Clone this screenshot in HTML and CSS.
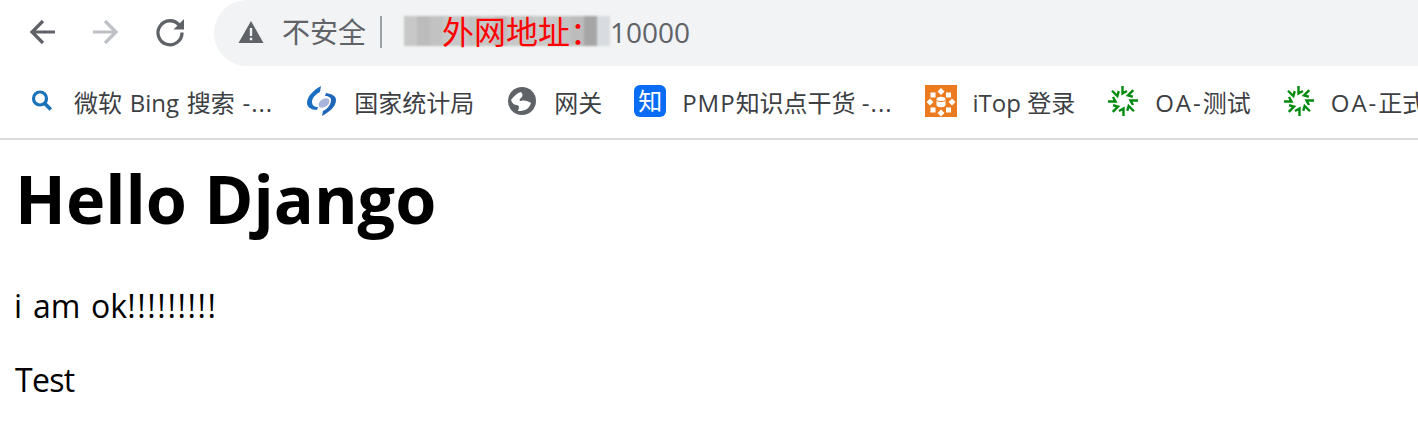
FILE: index.html
```html
<!DOCTYPE html>
<html lang="zh-CN">
<head>
<meta charset="utf-8">
<title>Hello Django</title>
<link rel="stylesheet" href="styles.css">
</head>
<body>
<header class="chrome">
  <div class="toolbar">
    <div class="nav">
      <svg class="nav-icon" viewBox="0 0 32 32"><path d="M29 16H6M17 5 6 16l11 11" fill="none" stroke="#5f6368" stroke-width="3.200"/></svg>
      <svg class="nav-icon" viewBox="0 0 32 32"><path d="M3 16h23M15 5l11 11-11 11" fill="none" stroke="#bdc1c6" stroke-width="3.200"/></svg>
      <svg class="nav-icon" viewBox="0 0 32 32"><path d="M25.400 9.300A12 12 0 1 0 28 16.500" fill="none" stroke="#5f6368" stroke-width="3.300"/><path d="M30 3V13.500H19.500z" fill="#5f6368"/></svg>
    </div>
    <div class="omnibox">
      <svg class="warn" viewBox="0 0 26 24"><path d="M13 1L25.500 23H.500z" fill="#5f6368"/><path d="M11.800 8h2.400v8h-2.400zM11.800 17.800h2.400v2.400h-2.400z" fill="#f1f3f4"/></svg>
      <span class="insecure">不安全</span>
      <span class="divider"></span>
      <span class="url"><span class="url-host">1</span><span class="url-port">10000</span></span>
    </div>
  </div>
  <nav class="bookmarks">
    <a class="bookmark bookmark-first">
      <span class="fav"><svg viewBox="0 0 32 32" class="fav-svg"><circle cx="14" cy="13.500" r="6.500" fill="none" stroke="#1a73b8" stroke-width="3.200"/><path d="M18.800 18.500l6 6" stroke="#1a73b8" stroke-width="3.600" fill="none"/></svg></span>
      <span class="label label-spaced">微软 Bing 搜索 <span class="more">-...</span></span>
    </a>
    <a class="bookmark">
      <span class="fav"><svg viewBox="0 0 32 32" class="fav-svg"><path d="M15 1C8 5 1 11 1 18c0 4 4 7 10 7l1-3c-4 0-6-2-6-5 0-4 4-8 8-10z" fill="#1a6fc0"/><path d="M16 31c7-4 14-9 14-16 0-4-4-6-10-7l-1 3c4 0 6 2 6 4 0 5-4 9-8 11z" fill="#1f66b8"/><ellipse cx="18" cy="18" rx="6" ry="4" transform="rotate(-35 18 18)" fill="#a9b4dc"/></svg></span>
      <span class="label">国家统计局</span>
    </a>
    <a class="bookmark">
      <span class="fav"><svg viewBox="0 0 32 32" class="fav-svg"><circle cx="16" cy="16" r="14" fill="#5f6368"/><path d="M5 15C8 11 11 8 15 7c2 2 2 4 0 6-2 1-2 3 0 3 3-1 7 0 10 2-1 3-3 6-6 7-3 1-5 1-7 1 1-3 2-5-1-6-3 0-5-2-6-5z" fill="#fff"/></svg></span>
      <span class="label">网关</span>
    </a>
    <a class="bookmark">
      <span class="fav zhihu">知</span>
      <span class="label"><span class="wide">PMP</span>知识点干货 <span class="more">-...</span></span>
    </a>
    <a class="bookmark">
      <span class="fav"><svg viewBox="0 0 32 32" class="fav-svg"><rect width="32" height="32" fill="#ec7a1f"/><g fill="#fff"><path d="M11.500 14c0-3 9-3 9 0v6c0 3-9 3-9 0z"/><path d="M16 3l3.500 3.500L16 10l-3.500-3.500zM5 13.500L8.500 17 5 20.500 1.500 17zM27 13.500l3.500 3.500-3.500 3.500-3.500-3.500zM16 24.500l3.500 3.500-3.500 3.500-3.500-3.500z"/><rect x="5.500" y="7.500" width="5" height="5"/><rect x="21" y="7.500" width="5" height="5"/><rect x="5.500" y="22.500" width="5" height="5"/><rect x="21" y="22.500" width="5" height="5"/></g><path d="M11.500 15.500c2 1.500 7 1.500 9 0" fill="none" stroke="#ec7a1f"/></svg></span>
      <span class="label">iTop 登录</span>
    </a>
    <a class="bookmark">
      <span class="fav"><svg viewBox="0 0 32 32" class="fav-svg"><defs><path id="oa" d="M15.500 1v7.500l4.500-2.500" fill="none" stroke="#008a0e" stroke-width="2.400"/></defs><use href="#oa"/><use href="#oa" transform="rotate(45 16 16)"/><use href="#oa" transform="rotate(90 16 16)"/><use href="#oa" transform="rotate(135 16 16)"/><use href="#oa" transform="rotate(180 16 16)"/><use href="#oa" transform="rotate(225 16 16)"/><use href="#oa" transform="rotate(270 16 16)"/><use href="#oa" transform="rotate(315 16 16)"/></svg></span>
      <span class="label"><span class="wider">OA-</span>测试</span>
    </a>
    <a class="bookmark">
      <span class="fav"><svg viewBox="0 0 32 32" class="fav-svg"><use href="#oa"/><use href="#oa" transform="rotate(45 16 16)"/><use href="#oa" transform="rotate(90 16 16)"/><use href="#oa" transform="rotate(135 16 16)"/><use href="#oa" transform="rotate(180 16 16)"/><use href="#oa" transform="rotate(225 16 16)"/><use href="#oa" transform="rotate(270 16 16)"/><use href="#oa" transform="rotate(315 16 16)"/></svg></span>
      <span class="label"><span class="wider">OA-</span>正式</span>
    </a>
  </nav>
</header>
<main class="content">
  <h1 class="title">Hello Django</h1>
  <p class="line line-ok">i am ok<span class="bangs">!!!!!!!!!</span></p>
  <p class="line line-test">Test</p>
</main>
<div class="mosaic" aria-hidden="true">
  <i class="t1"></i><i class="t2"></i><i class="t3"></i><i class="t1"></i><i class="t1"></i><i class="t3"></i><i class="t1"></i><i class="t2"></i><i class="t1"></i><i class="t3"></i><i class="t1"></i><i class="t1"></i><i class="t3"></i><i class="t2"></i><i class="t4"></i><i class="t5"></i>
</div>
<div class="annotation">外网地址：</div>
</body>
</html>
```
FILE: styles.css
```css
* { box-sizing: border-box; }
html, body { margin: 0; padding: 0; background: #fff; }
body {
  width: 1418px;
  height: 436px;
  overflow: hidden;
  position: relative;
  color: #000;
  font-family: "Open Sans", "Noto Sans CJK SC", sans-serif;
}
.chrome { border-bottom: 2px solid #dadce0; height: 140px; }
.toolbar { display: flex; height: 66px; }
.nav { display: flex; align-items: center; gap: 32px; padding: 0 0 3px 26px; width: 214px; }
.nav-icon { width: 32px; height: 32px; flex: none; }
.omnibox {
  flex: 1;
  display: flex;
  align-items: center;
  background: #f1f3f4;
  border-radius: 33px 0 0 33px;
  padding: 0 0 3px 24px;
  color: #5f6368;
  font-size: 28px;
}
.warn { width: 26px; height: 24px; flex: none; }
.insecure { margin-left: 18px; line-height: 40px; }
.divider { width: 2px; height: 32px; background: #9aa0a6; margin-left: 14px; }
.url { margin-left: 21px; display: flex; line-height: 40px; }
.url-host { width: 207px; }
.url-port { color: #5f6368; }
.bookmarks {
  display: flex;
  align-items: center;
  height: 72px;
  padding: 0 0 2px 26px;
  gap: 32px;
  color: #3c4043;
  font-size: 24px;
  white-space: nowrap;
  overflow: hidden;
}
.bookmark { display: flex; align-items: center; gap: 16px; flex: none; }
.bookmark-first { margin-right: 1px; }
.label { display: block; }
.label-spaced { word-spacing: 1.500px; }
.more { letter-spacing: 1px; }
.wide { letter-spacing: 1px; }
.wider { letter-spacing: 2px; }
.fav { width: 32px; height: 32px; flex: none; display: block; }
.fav-svg { width: 32px; height: 32px; display: block; }
.zhihu {
  background: #0a6cf5;
  border-radius: 6px;
  color: #fff;
  text-align: center;
  font-size: 24px;
  line-height: 31px;
}
.content { padding: 0 15px; }
.title { font-size: 66.500px; font-weight: 700; line-height: 88px; margin: 14px 0 42px; }
.line { font-size: 32px; line-height: 44px; margin: 30px 0 0; }
.line-ok { word-spacing: 2.500px; margin-left: -1px; }
.line-test { letter-spacing: -0.700px; }
.bangs { letter-spacing: 1.600px; }
.mosaic {
  position: absolute;
  left: 404px;
  top: 16px;
  width: 206px;
  height: 30px;
  display: flex;
  filter: blur(1px);
}
.mosaic i { flex: 1; display: block; }
.t1 { background: #c8c8c8; }
.t2 { background: #bcbcbc; }
.t3 { background: #c2c2c2; }
.t4 { background: #a6a6a6; }
.t5 { background: #d8dce0; }
.annotation {
  position: absolute;
  left: 442px;
  top: 8px;
  font-size: 32px;
  line-height: 44px;
  color: #ff0000;
  font-family: "Noto Sans CJK SC", sans-serif;
}
```
